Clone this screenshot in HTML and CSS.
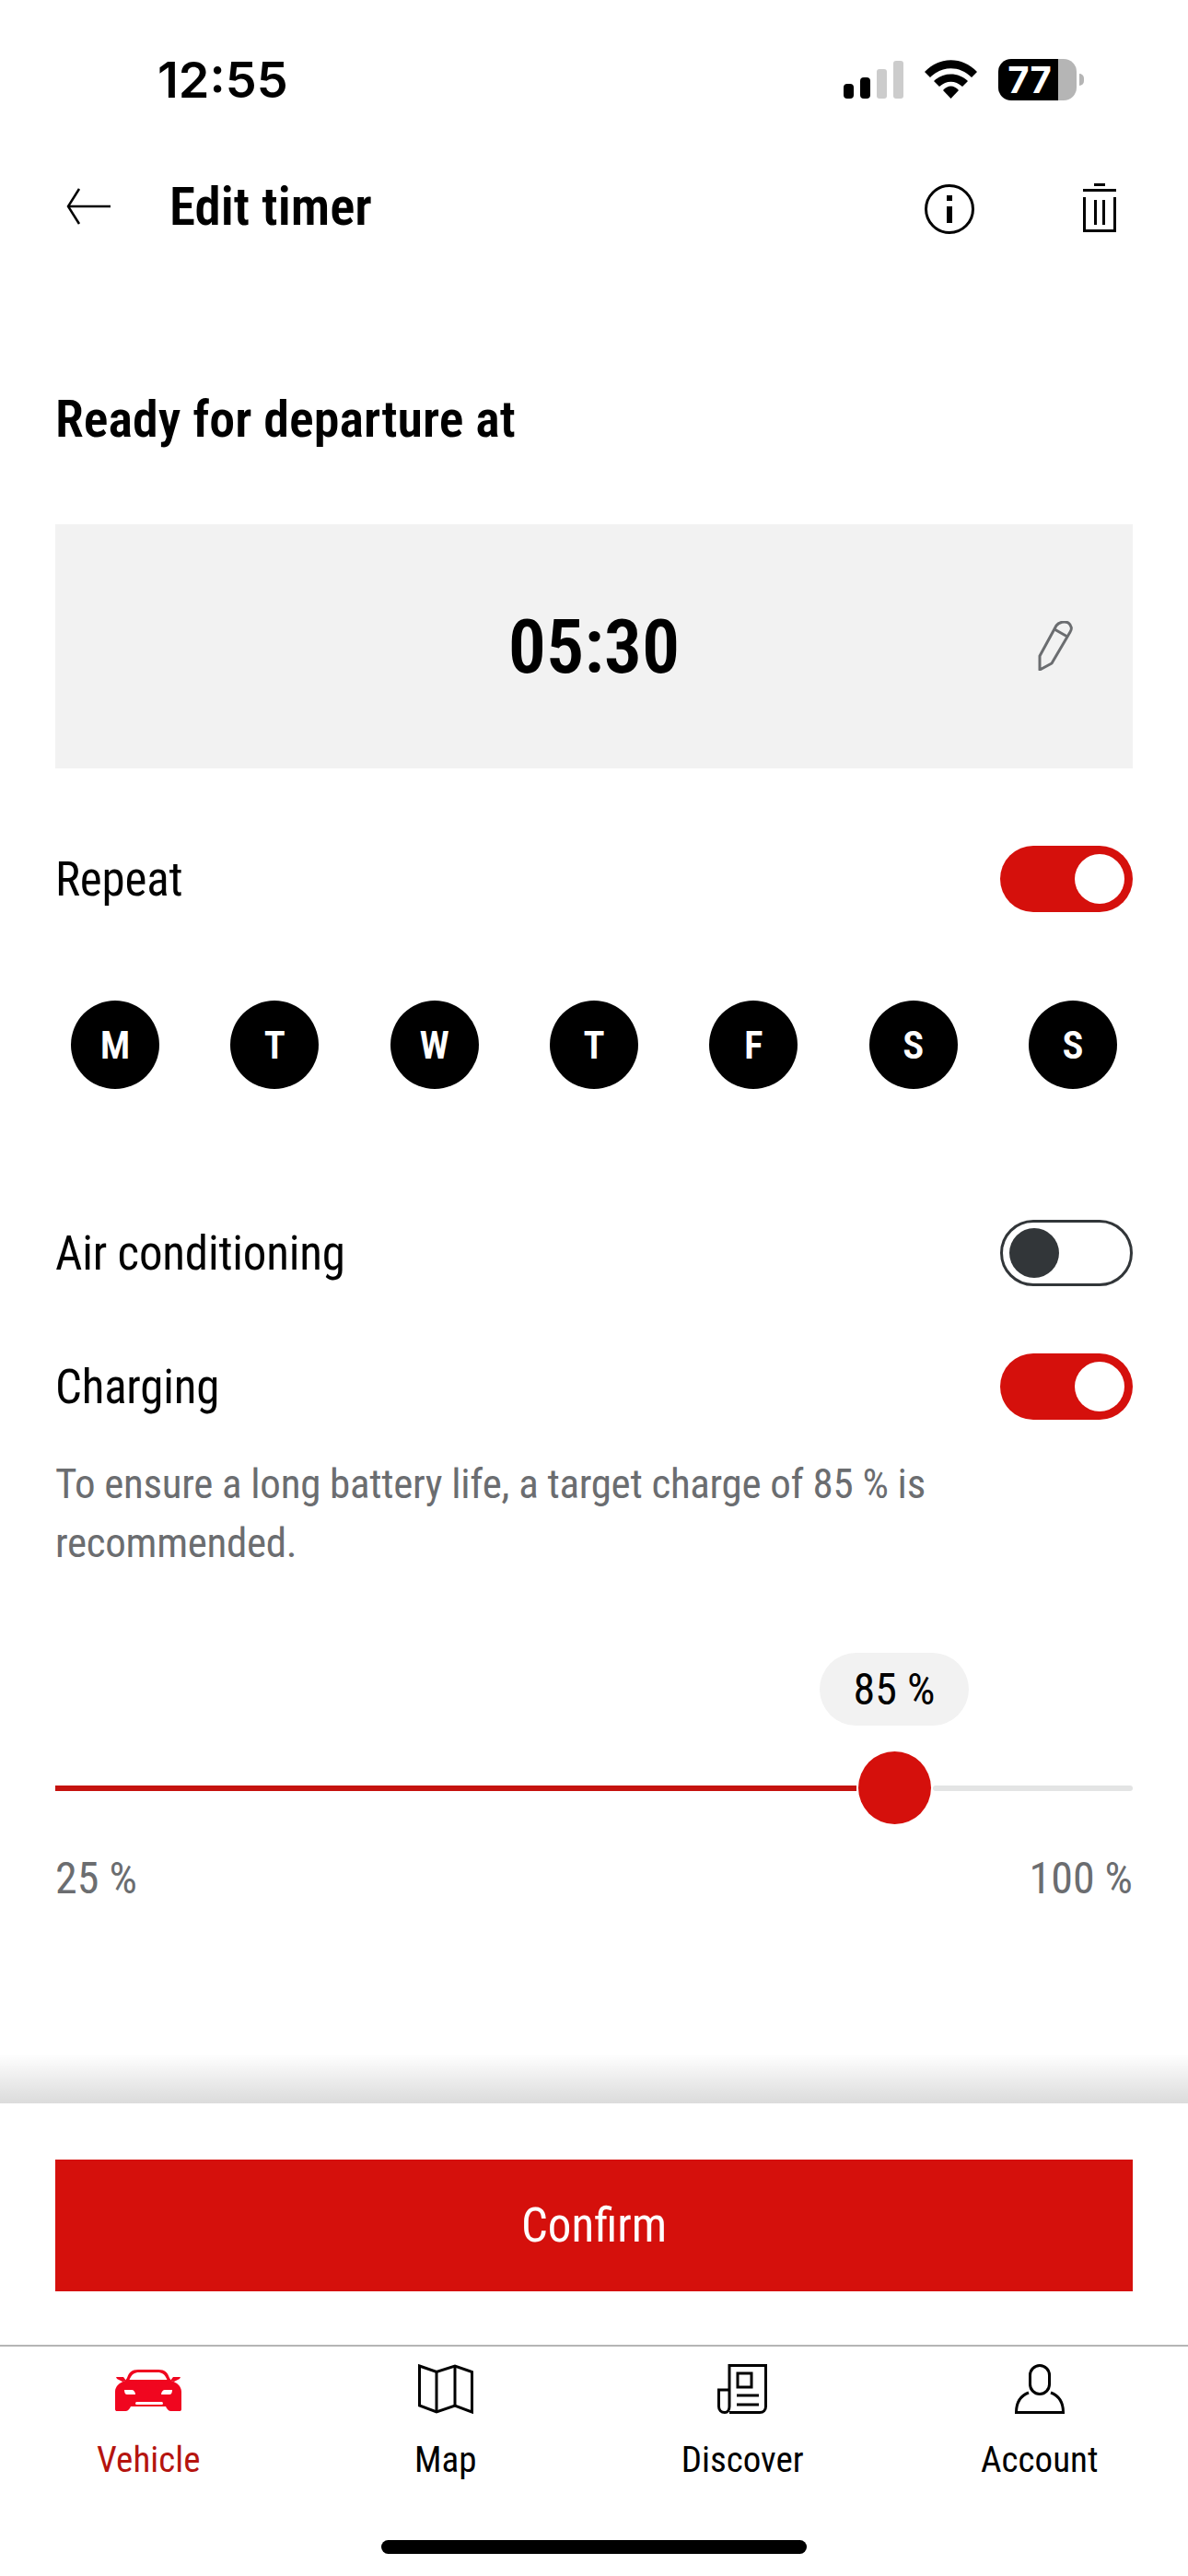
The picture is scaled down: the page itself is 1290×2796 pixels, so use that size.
FILE: index.html
```html
<!DOCTYPE html>
<html lang="en">
<head>
    <meta charset="UTF-8">
    <title>Edit timer</title>
    <meta name="viewport" content="width=device-width, initial-scale=1.0">
    <link rel="stylesheet" href="styles.css">
</head>
<body>

    <div class="phone">
        <div class="status-bar">
            <span class="clock">12:55</span>
            <div class="status-icons">
                <svg class="signal" width="65" height="41" viewBox="0 0 65 41">
                    <rect x="0" y="25" width="11" height="16" rx="4" fill="#000"/>
                    <rect x="18" y="18" width="11" height="23" rx="4" fill="#000"/>
                    <rect x="36" y="9" width="11" height="32" rx="3" fill="#ccc"/>
                    <rect x="54" y="0" width="11" height="41" rx="3" fill="#ccc"/>
                </svg>
                <svg class="wifi" width="57" height="42" viewBox="0 0 57 42">
                    <path d="M0 13 C16 -4 41 -4 57 13 L51 19 C38 6 19 6 6 19 Z" fill="#000"/>
                    <path d="M10 23 C20 13 37 13 47 23 L41 29 C33 22 24 22 16 29 Z" fill="#000"/>
                    <path d="M20 33 C25 27 32 27 37 33 L28.500 42 Z" fill="#000"/>
                </svg>
                <div class="battery">
                    <div class="battery-body"><span class="battery-level">77</span></div>
                    <div class="battery-nub"></div>
                </div>
            </div>
        </div>

        <div class="top-bar">
            <svg class="back" width="48" height="40" viewBox="0 0 48 40" fill="none" stroke="#000" stroke-width="2.500">
                <path d="M48 20 H2"/>
                <path d="M14 1 L2 20 L14 39"/>
            </svg>
            <h1>Edit timer</h1>
            <svg class="info" width="56" height="56" viewBox="0 0 56 56" fill="none" stroke="#000" stroke-width="3">
                <circle cx="28" cy="28" r="25.500"/>
                <rect x="25" y="13" width="6" height="6" fill="#000" stroke="none"/>
                <rect x="25" y="25" width="6" height="18" fill="#000" stroke="none"/>
            </svg>
            <svg class="trash" width="36" height="53" viewBox="0 0 36 53" fill="none" stroke="#000" stroke-width="3">
                <path d="M12 1.500 H24"/>
                <path d="M0 7.500 H36"/>
                <path d="M1.500 15 V51.500 H34.500 V15"/>
                <path d="M13.500 18 V45"/>
                <path d="M22.500 18 V45"/>
            </svg>
        </div>

        <div class="content">
            <h2>Ready for departure at</h2>

            <div class="time-card">
                <span class="time">05:30</span>
                <svg class="pencil" width="38" height="54" viewBox="0 0 38 54" fill="none" stroke="#6b6d70" stroke-width="3" stroke-linejoin="round">
                    <path d="M2 38 L20 5 C23 1 29 0 33 2 C37 5 37 9 35 12 L15 46 L2 53 Z"/>
                    <path d="M18 9 L32 17"/>
                </svg>
            </div>

            <div class="row row-repeat">
                <span class="row-label">Repeat</span>
                <div class="toggle on"><div class="knob"></div></div>
            </div>

            <div class="days">
                <div class="day">M</div>
                <div class="day">T</div>
                <div class="day">W</div>
                <div class="day">T</div>
                <div class="day">F</div>
                <div class="day">S</div>
                <div class="day">S</div>
            </div>

            <div class="row row-air">
                <span class="row-label">Air conditioning</span>
                <div class="toggle off"><div class="knob"></div></div>
            </div>

            <div class="row row-charging">
                <span class="row-label">Charging</span>
                <div class="toggle on"><div class="knob"></div></div>
            </div>

            <p class="hint">To ensure a long battery life, a target charge of 85 % is recommended.</p>

            <div class="slider">
                <div class="slider-pill">85 %</div>
                <div class="slider-track">
                    <div class="track-fill"></div>
                    <div class="thumb"></div>
                    <div class="track-rest"></div>
                </div>
            </div>
            <div class="slider-labels">
                <span>25 %</span>
                <span>100 %</span>
            </div>
        </div>

        <div class="footer-shadow"></div>
        <div class="footer">
            <button class="confirm">Confirm</button>
        </div>

        <nav class="tabs">
            <div class="tab active">
                <svg width="72" height="54" viewBox="0 0 72 54">
                    <path fill-rule="evenodd" d="M13 15 C15 9 18 6 25 6 H47 C54 6 57 9 59 15 L61 18 C67 20 72 24 72 30 V49 C72 50.500 71 51 70 51 H60 C58 51 56 48 55 46 H17 C16 48 14 51 12 51 H2 C1 51 0 50.500 0 49 V30 C0 24 5 20 11 18 Z M15.500 17 H56.500 C54 11 51 9 46 9 H26 C21 9 18 11 15.500 17 Z" fill="#f0061f"/>
                    <path d="M1 14 H9 L12 18 L8 19 L2 16 Z M71 14 H63 L60 18 L64 19 L70 16 Z" fill="#f0061f"/>
                    <path d="M10 28 H18 C20 28 22 30 22 33 H13 C11 33 10 31 10 28 Z" fill="#fff"/>
                    <path d="M62 28 H54 C52 28 50 30 50 33 H59 C61 33 62 31 62 28 Z" fill="#fff"/>
                    <rect x="22" y="41" width="30" height="3" rx="1.500" fill="#fff"/>
                </svg>
                <span>Vehicle</span>
            </div>
            <div class="tab">
                <svg width="60" height="54" viewBox="0 0 60 54" fill="none" stroke="#000" stroke-width="3">
                    <path d="M1.500 2 L20 8.500 L40 2 L58.500 8.500 V52 L40 45 L20 52 L1.500 45 Z"/>
                    <path d="M20 8.500 V52"/>
                    <path d="M40 2 V45"/>
                </svg>
                <span>Map</span>
            </div>
            <div class="tab">
                <svg width="54" height="54" viewBox="0 0 54 54" fill="none" stroke="#000" stroke-width="3">
                    <path d="M13 52.500 H46 C50 52.500 52.500 50 52.500 46 V1.500 H13 V46 C13 50 11 52.500 8 52.500 C4 52.500 1.500 50 1.500 46 V28 H13"/>
                    <rect x="22" y="10" width="15" height="15"/>
                    <path d="M21 34 H45"/>
                    <path d="M21 44 H45"/>
                </svg>
                <span>Discover</span>
            </div>
            <div class="tab">
                <svg width="54" height="54" viewBox="0 0 54 54" fill="none" stroke="#000" stroke-width="3">
                    <rect x="16.500" y="1.500" width="21" height="31" rx="10.500"/>
                    <path d="M15 31 C7 34 1.500 41 1.500 52.500 H52.500 C52.500 41 47 34 39 31"/>
                </svg>
                <span>Account</span>
            </div>
        </nav>

        <div class="home-bar"></div>
    </div>

</body>
</html>
```

FILE: styles.css
```css
body {
    margin: 0;
    background: #fff;
    color: #000;
    font-family: "Roboto", sans-serif;
    font-stretch: 75%;
}
.phone {
    width: 1290px;
    height: 2796px;
    overflow: hidden;
    display: flex;
    flex-direction: column;
}

/* Status bar */
.status-bar {
    height: 174px;
    box-sizing: border-box;
    padding: 64px 113px 0 171px;
    display: flex;
    justify-content: space-between;
    align-items: flex-start;
}
.clock {
    font-family: "Inter", sans-serif;
    font-weight: 600;
    font-size: 54px;
    line-height: 46px;
}
.status-icons {
    display: flex;
    align-items: flex-start;
}
.signal {
    margin-top: 2px;
}
.wifi {
    margin: 1px 23px 0 23px;
}
.battery {
    display: flex;
    align-items: center;
}
.battery-body {
    width: 85px;
    height: 45px;
    border-radius: 14px;
    background: linear-gradient(to right, #000 65px, #b5b5b5 65px);
}
.battery-level {
    display: block;
    width: 65px;
    padding-left: 3px;
    box-sizing: border-box;
    text-align: center;
    color: #fff;
    font-family: "Inter", sans-serif;
    font-weight: 700;
    font-size: 40px;
    line-height: 45px;
}
.battery-nub {
    width: 5px;
    height: 13px;
    margin-left: 3px;
    background: #b5b5b5;
    border-radius: 0 6px 6px 0;
}

/* Top bar */
.top-bar {
    height: 104px;
    box-sizing: border-box;
    padding: 25px 78px 0 72px;
    display: flex;
    align-items: flex-start;
}
.back {
    margin-top: 5px;
}
h1 {
    flex: 1;
    margin: 0 0 0 64px;
    font-size: 57px;
    line-height: 52px;
    font-weight: 600;
}
.trash {
    margin-left: 117px;
}

/* Content */
.content {
    padding: 0 60px;
    height: 2005px;
    box-sizing: border-box;
}
h2 {
    margin: 145px 0 0 0;
    font-size: 56px;
    line-height: 64px;
    font-weight: 600;
}
.time-card {
    height: 265px;
    margin-top: 82px;
    background: #f2f2f2;
    display: flex;
    align-items: center;
    justify-content: center;
    position: relative;
}
.time {
    font-weight: 600;
    font-size: 82px;
}
.pencil {
    position: absolute;
    right: 65px;
    top: 105px;
}
.row {
    display: flex;
    justify-content: space-between;
    align-items: center;
}
.row-label {
    font-size: 51px;
    letter-spacing: -0.2px;
}
.row-repeat {
    margin-top: 84px;
}
.row-air {
    margin-top: 142px;
}
.row-charging {
    margin-top: 73px;
}
.toggle {
    width: 144px;
    height: 72px;
    box-sizing: border-box;
    border-radius: 36px;
    display: flex;
    align-items: center;
    padding: 0 9px;
}
.toggle .knob {
    width: 54px;
    height: 54px;
    border-radius: 50%;
}
.toggle.on {
    background: #d5100c;
    justify-content: flex-end;
}
.toggle.on .knob {
    background: #fff;
}
.toggle.off {
    border: 3px solid #323639;
    padding: 0 7px;
}
.toggle.off .knob {
    background: #323639;
}
.days {
    display: flex;
    justify-content: space-between;
    margin: 96px 17px 0 17px;
}
.day {
    width: 96px;
    height: 96px;
    border-radius: 50%;
    background: #000;
    color: #fff;
    font-weight: 600;
    font-size: 43px;
    display: flex;
    align-items: center;
    justify-content: center;
}
.hint {
    margin: 38px 0 0 0;
    color: #6b6d70;
    font-size: 45px;
    letter-spacing: -0.3px;
    line-height: 64px;
    width: 1000px;
}

/* Slider */
.slider {
    position: relative;
    margin-top: 194px;
}
.slider-pill {
    position: absolute;
    left: 830px;
    top: -107px;
    width: 162px;
    height: 79px;
    border-radius: 40px;
    background: #f2f2f2;
    font-size: 48px;
    display: flex;
    align-items: center;
    justify-content: center;
}
.slider-track {
    display: flex;
    align-items: center;
    height: 79px;
}
.track-fill {
    width: 870px;
    height: 6px;
    background: #c5130f;
}
.thumb {
    width: 79px;
    height: 79px;
    margin: 0 2px;
    border-radius: 50%;
    background: #d5100c;
}
.track-rest {
    flex: 1;
    height: 6px;
    border-radius: 3px;
    background: #e3e4e4;
}
.slider-labels {
    display: flex;
    justify-content: space-between;
    margin-top: 31px;
    color: #6b6d70;
    font-size: 48px;
    line-height: 56px;
}

/* Footer */
.footer-shadow {
    height: 54px;
    margin-top: -54px;
    background: linear-gradient(to bottom, rgba(0,0,0,0), rgba(0,0,0,0.14));
}
.footer {
    height: 264px;
    box-sizing: border-box;
    padding: 61px 60px 0 60px;
    border-bottom: 2px solid #b5b5b5;
}
.confirm {
    width: 100%;
    height: 143px;
    border: none;
    background: #d5100c;
    color: #fff;
    font-family: inherit;
    font-stretch: inherit;
    font-size: 51px;
}

/* Tab bar */
.tabs {
    display: grid;
    grid-template-columns: repeat(4, 1fr);
    padding-top: 19px;
}
.tab {
    display: flex;
    flex-direction: column;
    align-items: center;
    font-size: 39px;
}
.tab svg {
    display: block;
}
.tab span {
    margin-top: 25px;
    line-height: 50px;
}
.tab.active {
    color: #b5140f;
}
.home-bar {
    width: 462px;
    height: 15px;
    margin: 62px auto 0 auto;
    border-radius: 8px;
    background: #000;
}
```
